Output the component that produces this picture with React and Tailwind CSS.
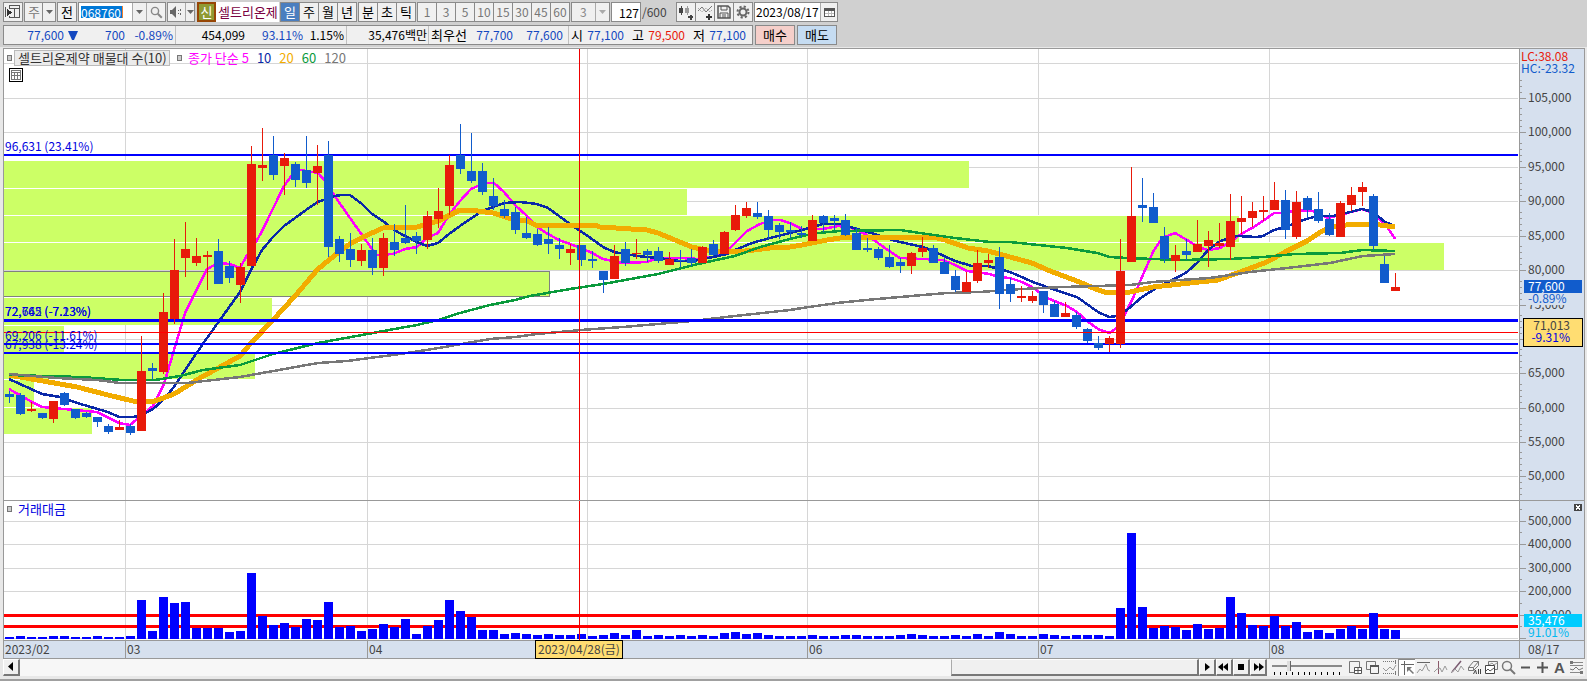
import React, { useState } from 'react';
import clsx from 'clsx';

// [up/down, high, open/close top, open/close bottom, low] in chart pixels
const CANDLES = [
  ['d', 391, 394, 397, 403], ['d', 393, 395, 414, 415], ['u', 402, 409, 411, 412], ['d', 413, 413, 418, 419],
  ['u', 401, 401, 419, 423], ['d', 392, 393, 405, 406], ['d', 409, 409, 418, 419], ['d', 412, 413, 417, 418],
  ['d', 417, 417, 422, 427], ['d', 424, 426, 432, 434], ['u', 420, 427, 430, 430], ['d', 424, 426, 433, 435],
  ['u', 336, 371, 431, 431], ['d', 363, 368, 371, 379], ['u', 293, 312, 372, 374], ['u', 239, 270, 319, 324],
  ['u', 222, 249, 258, 277], ['u', 238, 256, 263, 266], ['u', 251, 255, 257, 290], ['d', 239, 251, 284, 284],
  ['d', 261, 266, 278, 283], ['u', 263, 267, 285, 303], ['u', 146, 164, 266, 266], ['u', 128, 165, 168, 181],
  ['d', 136, 155, 175, 180], ['u', 153, 158, 166, 195], ['d', 162, 164, 180, 187], ['d', 136, 170, 183, 188],
  ['u', 145, 166, 173, 205], ['d', 141, 155, 247, 257], ['d', 236, 239, 254, 262], ['d', 233, 249, 260, 267],
  ['u', 244, 250, 261, 266], ['d', 238, 250, 268, 275], ['u', 233, 238, 268, 276], ['d', 224, 242, 250, 256],
  ['d', 205, 238, 243, 244], ['d', 232, 236, 241, 254], ['u', 211, 216, 240, 249], ['u', 188, 211, 219, 228],
  ['u', 155, 165, 206, 215], ['d', 124, 155, 169, 174], ['d', 133, 171, 181, 183], ['d', 163, 171, 192, 195],
  ['d', 178, 196, 206, 210], ['d', 200, 209, 216, 218], ['d', 207, 212, 230, 234], ['d', 217, 233, 238, 239],
  ['d', 229, 234, 245, 246], ['d', 227, 239, 244, 254], ['d', 238, 245, 249, 259], ['u', 244, 249, 253, 265],
  ['d', 245, 245, 260, 266], ['d', 251, 259, 261, 268], ['d', 271, 271, 280, 293], ['u', 245, 256, 279, 279],
  ['d', 242, 249, 263, 266], ['u', 239, 253, 254, 259], ['d', 249, 251, 255, 262], ['d', 247, 251, 261, 263],
  ['u', 252, 259, 265, 265], ['d', 250, 260, 261, 267], ['d', 249, 258, 263, 266], ['u', 246, 247, 263, 263],
  ['d', 240, 244, 255, 256], ['u', 231, 232, 254, 254], ['u', 205, 215, 230, 231], ['u', 202, 208, 216, 218],
  ['d', 202, 213, 217, 219], ['d', 210, 216, 230, 239], ['d', 223, 225, 232, 239], ['d', 222, 230, 232, 238],
  ['d', 226, 233, 235, 238], ['u', 215, 220, 241, 241], ['d', 215, 216, 223, 232], ['d', 215, 218, 221, 230],
  ['d', 214, 220, 235, 236], ['d', 227, 233, 250, 250], ['d', 238, 248, 250, 252], ['d', 247, 249, 258, 260],
  ['d', 245, 257, 267, 268], ['d', 258, 262, 266, 273], ['u', 252, 253, 266, 274], ['u', 237, 248, 252, 257],
  ['d', 245, 248, 263, 263], ['d', 257, 262, 274, 274], ['d', 270, 276, 290, 292], ['u', 272, 282, 292, 292],
  ['u', 250, 263, 281, 283], ['u', 254, 260, 263, 268], ['d', 247, 257, 294, 309], ['d', 278, 284, 294, 302],
  ['u', 286, 296, 298, 302], ['u', 291, 296, 301, 303], ['d', 291, 291, 305, 313], ['d', 301, 304, 317, 317],
  ['u', 302, 313, 317, 317], ['d', 312, 315, 327, 329], ['d', 328, 329, 341, 343], ['d', 336, 343, 348, 350],
  ['u', 336, 338, 344, 352], ['u', 239, 271, 344, 348], ['u', 167, 216, 262, 262], ['d', 178, 205, 208, 222],
  ['d', 193, 207, 223, 223], ['d', 227, 236, 259, 263], ['u', 245, 255, 261, 272], ['d', 239, 251, 255, 260],
  ['u', 220, 244, 252, 252], ['u', 231, 240, 246, 267], ['u', 223, 243, 246, 248], ['u', 194, 221, 247, 260],
  ['u', 196, 218, 222, 234], ['u', 202, 211, 218, 227], ['u', 196, 210, 212, 221], ['u', 182, 200, 210, 210],
  ['d', 190, 200, 230, 239], ['u', 191, 202, 237, 239], ['d', 196, 198, 210, 218], ['d', 192, 209, 221, 223],
  ['d', 213, 219, 235, 236], ['u', 201, 203, 237, 237], ['u', 187, 195, 205, 211], ['u', 182, 187, 192, 206],
  ['d', 194, 196, 246, 250], ['d', 256, 264, 283, 283], ['u', 273, 287, 291, 291],
];

const VOLUMES = [
  2, 3, 2, 2, 3, 3, 2, 2, 3, 2, 2, 3, 39, 8, 42, 36, 37, 11, 11, 11, 7, 8, 66, 23, 14, 16, 12, 20, 19, 37, 12, 13,
  8, 10, 15, 12, 20, 5, 13, 19, 39, 28, 22, 9, 9, 5, 6, 5, 4, 5, 4, 4, 5, 3, 4, 6, 4, 9, 3, 4, 3, 4, 3, 4, 3, 6, 7,
  5, 6, 4, 3, 3, 3, 4, 3, 3, 4, 4, 3, 3, 3, 4, 5, 4, 3, 3, 4, 3, 5, 3, 7, 5, 3, 3, 5, 4, 3, 4, 4, 4, 3, 31, 106, 32,
  11, 13, 12, 9, 15, 10, 11, 42, 26, 14, 13, 23, 13, 17, 7, 9, 6, 10, 13, 10, 26, 10, 9,
];

const MA5 = '9,389 32,402 42,407 64,409 97,412 119,423 130,425 147,411 153,406 164,384 185,313 207,269 218,263 230,264 240,268 246,257 256,242 262,231 284,186 295,171 301,170 318,173 327,183 334,195 350,218 372,249 377,255 393,254 405,249 417,247 427,238 438,233 449,215 460,201 471,189 480,185 487,183 494,183 504,192 515,205 527,216 537,227 548,234 559,240 570,244 581,248 592,253 603,259 623,263 647,262 658,258 680,258 700,259 718,256 730,248 735,243 747,231 760,224 772,220 780,220 790,223 802,229 823,229 838,226 852,228 867,235 878,243 889,251 900,258 923,259 943,260 955,265 967,271 990,274 998,277 1010,278 1022,282 1032,287 1047,298 1067,306 1077,312 1087,321 1098,329 1109,333 1117,328 1125,314 1133,298 1142,277 1153,252 1162,238 1175,233 1187,240 1198,247 1208,250 1220,248 1230,242 1241,234 1252,228 1263,221 1274,213 1285,213 1297,210 1313,211 1328,218 1340,215 1362,209 1373,213 1388,228 1395,239';
const MA10 = '9,379 42,394 60,397 77,403 108,412 119,417 133,417 142,415 153,409 163,400 174,387 185,370 207,338 240,292 251,270 262,250 273,237 284,226 306,210 318,202 334,196 342,195 350,195 362,204 372,214 383,221 394,230 405,236 417,242 427,246 438,243 449,234 460,226 482,211 504,203 520,202 537,204 548,208 570,224 592,239 603,247 614,252 637,256 658,258 680,261 693,261 713,257 727,254 735,250 752,243 770,238 790,233 802,230 823,224 840,224 857,229 878,235 889,239 900,242 923,247 933,251 955,261 972,266 988,266 1010,272 1033,282 1055,290 1077,297 1098,312 1109,317 1117,316 1127,310 1142,297 1158,287 1180,276 1187,272 1198,262 1208,250 1220,241 1237,236 1257,237 1263,236 1274,230 1285,227 1303,220 1317,216 1333,216 1350,212 1362,209 1373,212 1385,222 1395,226';
const MA20 = '9,375 43,381 77,387 108,395 133,401 155,401 174,394 200,378 240,356 251,343 273,320 295,296 318,269 334,256 350,244 363,237 383,228 400,227 417,227 438,221 460,210 470,210 493,213 515,220 528,221 535,225 595,225 600,227 647,230 658,233 675,240 692,247 710,251 737,252 770,248 790,247 802,245 827,240 847,237 933,237 945,240 968,248 988,251 1010,257 1032,263 1050,271 1077,281 1098,290 1108,293 1130,292 1153,287 1190,283 1218,280 1240,272 1267,262 1285,252 1307,241 1322,231 1333,227 1353,224 1380,225 1395,227';
const MA60 = '9,375 80,377 123,380 155,380 180,376 203,370 240,365 273,354 318,343 362,335 400,328 417,325 438,320 460,313 490,305 515,300 530,296 570,289 603,284 658,274 698,264 735,256 760,247 790,239 802,236 818,233 840,231 900,230 913,232 955,238 990,242 1010,242 1067,248 1097,253 1110,257 1127,258 1180,260 1230,259 1263,257 1295,254 1340,253 1363,250 1395,251';
const MA120 = '9,374 57,378 97,380 120,383 147,383 187,383 240,377 290,368 318,363 347,361 400,354 433,349 467,343 490,339 515,337 537,334 581,330 623,327 658,324 692,321 735,316 790,310 802,308 837,303 877,299 923,295 947,293 980,292 1022,289 1063,287 1097,286 1130,285 1153,282 1180,280 1210,278 1250,272 1287,268 1330,263 1363,256 1395,254';

// volume profile: [top, bottom, right edge]
const PROFILE = [
  [161, 188, 969], [189, 215, 687], [216, 242, 1239], [243, 270, 1444], [298, 325, 272],
  [326, 353, 64], [354, 379, 255], [380, 407, 34], [408, 434, 92],
];

const PRICE_GRID = [63, 98, 132, 167, 201, 236, 270, 305, 339, 373, 408, 442, 476];
const PRICE_LABELS = [
  [98, '105,000'], [132, '100,000'], [167, '95,000'], [201, '90,000'], [236, '85,000'], [270, '80,000'],
  [305, '75,000'], [373, '65,000'], [408, '60,000'], [442, '55,000'], [476, '50,000'],
];
const VOLUME_GRID = [521, 544, 568, 591, 615, 638];
const VOLUME_LABELS = [[521, '500,000'], [544, '400,000'], [568, '300,000'], [591, '200,000'], [615, '100,000']];
const MONTHS = [[125, '03'], [367, '04'], [587, ''], [807, '06'], [1038, '07'], [1269, '08']];
const LEVELS = [[154, 2], [319, 3], [343, 2], [352, 2]];
const CROSS = { x: 579, y: 332 };

const LEFT = 4;
const WIDTH = 1515;
const pct = (x) => `${((x - LEFT) / WIDTH) * 100}%`;

const Down = ({ className = 'fill-[#666]' }) => (
  <svg width="7" height="4" viewBox="0 0 7 4" className={className}>
    <path d="M0 0h7L3.5 4z" />
  </svg>
);

const ToolButton = ({ label, className, children }) => (
  <button
    type="button"
    aria-label={label}
    className={clsx('flex h-5 shrink-0 items-center justify-center border border-[#8a8a8a] bg-[#f0f0f0]', className)}
  >
    {children}
  </button>
);

const Segments = ({ items, active, onSelect, className }) => (
  <div className={clsx('flex h-5 shrink-0 border border-[#8a8a8a] bg-[#f0f0f0]', className)}>
    {items.map((item, i) => (
      <button
        key={item}
        type="button"
        onClick={() => onSelect && onSelect(item)}
        className={clsx(
          'flex flex-1 items-center justify-center',
          i > 0 && 'border-l border-[#8a8a8a]',
          item === active && 'bg-[#4a7ebf] text-white',
        )}
      >
        {item}
      </button>
    ))}
  </div>
);

const Toolbar = () => {
  const [period, setPeriod] = useState('일');

  return (
    <div className="flex h-5 items-center gap-px pl-[3px] text-[13px] leading-[18px]">
      <ToolButton label="창 열기" className="w-5">
        <svg width="16" height="14" viewBox="0 0 16 14" fill="none" stroke="#555" shapeRendering="crispEdges">
          <path d="M4.5 4V.5h10v12h-10v-2M4 3.5h11M9.500 3v10M.5 2v10" />
          <path d="M2 4l5 3.500L2 11z" fill="#333" stroke="none" />
        </svg>
      </ToolButton>
      <div className="relative flex h-5 w-8 shrink-0 border border-[#8a8a8a] bg-[#f0f0f0]">
        <select aria-label="주기" className="w-full appearance-none bg-transparent pl-[3px] text-[#777] outline-none">
          <option>주</option>
        </select>
        <span className="pointer-events-none absolute inset-y-0 right-0 flex w-[13px] items-center justify-center border-l border-[#8a8a8a]">
          <Down />
        </span>
      </div>
      <ToolButton className="w-5">전</ToolButton>
      <div className="flex h-5 w-[88px] shrink-0 items-center border border-[#8a8a8a] bg-white">
        <div className="flex-1 pl-0.5">
          <input
            aria-label="종목코드"
            defaultValue="068760"
            className="block h-3 w-[42px] border-r border-[#f08030] bg-[#0078d7] text-[12px] leading-3 text-white outline-none"
          />
        </div>
        <button type="button" aria-label="종목 목록" className="flex h-full w-3.5 items-center justify-center border-l border-[#aaa] bg-[#f0f0f0]">
          <Down />
        </button>
        <button type="button" aria-label="종목 검색" className="flex h-full w-[19px] items-center justify-center border-l border-[#aaa] bg-[#f0f0f0]">
          <svg width="13" height="13" viewBox="0 0 13 13" fill="none" stroke="#888">
            <circle cx="5" cy="5" r="3.6" strokeWidth="1.4" />
            <path d="M7.8 7.8l4 4" strokeWidth="2" />
          </svg>
        </button>
      </div>
      <div className="flex h-5 w-7 shrink-0 border border-[#8a8a8a] bg-[#f0f0f0]">
        <button type="button" aria-label="소리" className="flex w-[17px] items-center justify-center">
          <svg width="13" height="12" viewBox="0 0 13 12" fill="#666">
            <path d="M0 4h2l4-4v12L2 8H0zM8 4h1v1H8zM8 7h1v1H8zM10 3h1v2h-1zM10 7h1v2h-1z" />
          </svg>
        </button>
        <button type="button" aria-label="소리 설정" className="flex flex-1 items-center justify-center border-l border-[#aaa]">
          <Down />
        </button>
      </div>
      <div className="ml-px flex h-5 w-[82px] shrink-0 items-center bg-white text-[#7a0040]">
        <span className="flex h-5 w-[19px] shrink-0 items-center justify-center border-2 border-[#974706] bg-[#8f9a33] text-white">신</span>
        <span className="overflow-hidden pl-0.5 whitespace-nowrap">셀트리온제</span>
      </div>
      <Segments items={['일', '주', '월', '년']} active={period} onSelect={setPeriod} className="w-[77px]" />
      <Segments items={['분', '초', '틱']} className="w-[58px]" />
      <Segments items={['1', '3', '5', '10', '15', '30', '45', '60']} className="w-[153px] text-[12px] text-[#777]" />
      <div className="relative flex h-5 w-[39px] shrink-0 border border-[#8a8a8a] bg-[#f0f0f0]">
        <select aria-label="간격" className="w-full appearance-none bg-transparent pl-2 text-[12px] text-[#888] outline-none">
          <option>3</option>
        </select>
        <span className="pointer-events-none absolute inset-y-0 right-0 flex w-3.5 items-center justify-center border-l border-[#aaa]">
          <Down className="fill-[#aaa]" />
        </span>
      </div>
      <label className="flex h-5 w-16 shrink-0 items-center text-[12px] text-[#444]">
        <input
          aria-label="조회 개수"
          defaultValue="127"
          className="h-5 w-[30px] border border-[#8a8a8a] bg-white pr-px text-right text-black outline-none"
        />
        <span className="pl-px">/600</span>
      </label>
      <div className="flex h-5 w-[77px] shrink-0 border border-[#8a8a8a] bg-[#f0f0f0]">
        <button type="button" aria-label="차트 추가" className="flex flex-1 items-center justify-center">
          <svg width="15" height="15" viewBox="0 0 15 15" fill="#444" shapeRendering="crispEdges">
            <path d="M0 3h4v5H0zM1.5 1h1v9h-1z" />
            <path d="M6 3h4v5H6zM7.5 1h1v9h-1z" fill="#999" />
            <path d="M9 11h5v2H9zM10.5 9.500h2v5h-2z" />
          </svg>
        </button>
        <button type="button" aria-label="지표 추가" className="flex flex-1 items-center justify-center border-l border-[#8a8a8a]">
          <svg width="15" height="15" viewBox="0 0 15 15" fill="none" stroke="#777">
            <path d="M0 6l4-4 4 5 6-6" />
            <path d="M0 3l4 4 4-4 4 4 2-2" stroke="#aaa" strokeDasharray="2 1" />
            <path d="M8 12h6M11 9v6" stroke="#333" strokeWidth="2" />
          </svg>
        </button>
        <button type="button" aria-label="저장" className="flex flex-1 items-center justify-center border-l border-[#8a8a8a]">
          <svg width="14" height="14" viewBox="0 0 14 14" fill="none" stroke="#555" strokeWidth="1.5">
            <path d="M1 1h10l2 2v10H1z" />
            <path d="M4 1v4h6V1M3 13V8h8v5M5 10h4M5 12h4" strokeWidth="1" />
          </svg>
        </button>
        <button type="button" aria-label="설정" className="flex flex-1 items-center justify-center border-l border-[#8a8a8a]">
          <svg width="14" height="14" viewBox="0 0 14 14" fill="none" stroke="#666">
            <circle cx="7" cy="7" r="3.5" strokeWidth="2" />
            <circle cx="7" cy="7" r="5.5" strokeWidth="2" strokeDasharray="2.200 2.120" />
          </svg>
        </button>
      </div>
      <div className="flex h-5 w-[84px] shrink-0 items-center border border-[#8a8a8a] bg-white">
        <input aria-label="기준일" defaultValue="2023/08/17" className="w-[65px] pl-px text-[12px] outline-none" />
        <button type="button" aria-label="달력" className="flex h-full flex-1 items-center justify-center border-l border-[#aaa] bg-[#f0f0f0]">
          <svg width="11" height="10" viewBox="0 0 11 10" fill="none" stroke="#555" shapeRendering="crispEdges">
            <path d="M.5 1.500h10v8H.5z" fill="#fff" />
            <path d="M0 2h11" strokeWidth="3" />
            <path d="M4 4v5M7 4v5M1 6.500h9" stroke="#bbb" />
          </svg>
        </button>
      </div>
    </div>
  );
};

const QuoteBar = () => (
  <div className="flex h-5 gap-0.5 pl-[3px] text-[12px] leading-[18px] text-black">
    <div className="flex h-5 w-[750px] shrink-0 items-center border border-[#8a8a8a] bg-[#f0f0f0] text-right whitespace-nowrap">
      <span className="w-[60px] text-[#1448c0]">77,600</span>
      <svg width="10" height="9" viewBox="0 0 10 9" className="ml-1 fill-[#1448c0]">
        <path d="M0 0h10L6 9H4z" />
      </svg>
      <span className="w-[47px] text-[#1448c0]">700</span>
      <span className="w-12 text-[#1448c0]">-0.89%</span>
      <span className="ml-0.5 h-full w-px bg-[#c0c0c0]" />
      <span className="w-[69px]">454,099</span>
      <span className="w-[58px] text-[#1448c0]">93.11%</span>
      <span className="w-[41px]">1.15%</span>
      <span className="ml-0.5 h-full w-px bg-[#c0c0c0]" />
      <span className="w-20">35,476백만</span>
      <span className="ml-px h-full w-px bg-[#c0c0c0]" />
      <span className="w-[38px] text-[13px]">최우선</span>
      <span className="w-[46px] text-[#1448c0]">77,700</span>
      <span className="w-[50px] text-[#1448c0]">77,600</span>
      <span className="ml-[5px] h-full w-px bg-[#c0c0c0]" />
      <span className="w-3.5 text-[13px]">시</span>
      <span className="w-[41px] text-[#1448c0]">77,100</span>
      <span className="w-5 text-[13px]">고</span>
      <span className="w-[41px] text-[#e8190a]">79,500</span>
      <span className="w-5 text-[13px]">저</span>
      <span className="w-[41px] text-[#1448c0]">77,100</span>
    </div>
    <button type="button" className="h-5 w-10 shrink-0 border border-[#8a8a8a] bg-[#f5cfca] text-[13px]">매수</button>
    <button type="button" className="h-5 w-10 shrink-0 border border-[#8a8a8a] bg-[#c5dcf2] text-[13px]">매도</button>
  </div>
);

const Marker = () => <span className="h-1.5 w-[5px] shrink-0 border border-[#777] bg-[#ccc]" />;

const LevelLabel = ({ className, children }) => (
  <span className={clsx('absolute left-px whitespace-nowrap text-[#0000e0]', className)}>{children}</span>
);

const PricePane = () => (
  <div className="relative min-w-0 flex-1">
    <svg viewBox="4 49 1515 451" preserveAspectRatio="none" shapeRendering="crispEdges" className="block h-[451px] w-full">
      {MONTHS.map(([x]) => <rect key={x} x={x} y="49" width="1" height="451" fill="#d6d6d6" />)}
      {PRICE_GRID.map((y) => <rect key={y} x="4" y={y} width="1514" height="1" fill="#d6d6d6" />)}
      {PROFILE.map(([top, bottom, right]) => (
        <g key={top}>
          <rect x="4" y={top - 1} width={right - 4} height="1" fill="#fff" />
          <rect x="4" y={top} width={right - 4} height={bottom - top} fill="#ccff66" />
        </g>
      ))}
      <rect x="3.5" y="271.500" width="546" height="25" fill="#ccff66" stroke="#808080" />
      <g fill="none" strokeLinejoin="round">
        <polyline points={MA5} stroke="#ff00ff" strokeWidth="2.5" />
        <polyline points={MA10} stroke="#0a28a8" strokeWidth="2.5" />
        <polyline points={MA20} stroke="#f2ac00" strokeWidth="5" />
        <polyline points={MA60} stroke="#0a9a3c" strokeWidth="2.5" />
        <polyline points={MA120} stroke="#777" strokeWidth="2.5" />
      </g>
      {LEVELS.map(([y, h]) => <rect key={y} x="4" y={y} width="1514" height={h} fill="#0000ff" />)}
      {CANDLES.map(([dir, high, top, bottom, low], i) => (
        <g key={i} fill={dir === 'u' ? '#e81a0a' : '#115ccc'}>
          <rect x={9 + 11 * i} y={high} width="1" height={low - high} />
          <rect x={5 + 11 * i} y={top} width="9" height={bottom - top} />
        </g>
      ))}
      <rect x="4" y={CROSS.y} width="1514" height="1" fill="#f00" />
      <rect x={CROSS.x} y="49" width="1" height="451" fill="#e00" />
    </svg>
    <div className="absolute top-px left-[3px] flex h-4 items-center text-[13px] leading-4 whitespace-nowrap">
      <Marker />
      <span className="ml-0.5 h-4 w-[156px] border border-[#bbb] bg-[#ebebeb] pl-[3px] leading-[13px] text-[#333]">
        셀트리온제약 매물대 수(10)
      </span>
      <span className="w-[7px]" />
      <Marker />
      <span className="ml-1.5 flex gap-2">
        <span className="text-[#ff00ff]">종가 단순 5</span>
        <span className="text-[#0a28a8]">10</span>
        <span className="text-[#f2ac00]">20</span>
        <span className="text-[#0a9a3c]">60</span>
        <span className="text-[#777]">120</span>
      </span>
    </div>
    <button type="button" aria-label="표 보기" className="absolute top-[19px] left-[5px]">
      <svg width="14" height="14" viewBox="0 0 14 14" fill="none" shapeRendering="crispEdges">
        <path d="M.5.5h13v13H.5z" fill="#fff" stroke="#000" />
        <path d="M2.500 2.500h9v9h-9zM2 4.500h10M2 7.500h10M5.500 4v8M8.500 4v8" stroke="#777" />
      </svg>
    </button>
    <div className="text-[12px] leading-4">
      <LevelLabel className="top-[89px]">96,631 (23.41%)</LevelLabel>
      <LevelLabel className="top-[254px]">72,765 (-7.13%)</LevelLabel>
      <LevelLabel className="top-[254px]">72,642 (-7.23%)</LevelLabel>
      <LevelLabel className="top-[278px]">69,206 (-11.61%)</LevelLabel>
      <LevelLabel className="top-[287px]">67,938 (-13.24%)</LevelLabel>
    </div>
  </div>
);

const PriceAxis = () => (
  <svg width="65" height="451" viewBox="1519 49 65 451" shapeRendering="crispEdges" className="block shrink-0 bg-[#d6e0ee] text-[12px]">
    <rect x="1519" y="49" width="1" height="451" fill="#999" />
    {PRICE_GRID.slice(1).map((y) => (
      <g key={y} fill="#999">
        <rect x="1520" y={y} width="6" height="1" />
        {[6, 12, 18, 24].filter((d) => y - d > 75).map((d) => (
          <rect key={d} x="1520" y={y - d} width="2" height="1" />
        ))}
      </g>
    ))}
    {[482, 488, 494].map((y) => <rect key={y} x="1520" y={y} width="2" height="1" fill="#999" />)}
    <g fill="#444">
      {PRICE_LABELS.map(([y, label]) => <text key={y} x="1528" y={y + 4}>{label}</text>)}
    </g>
    <text x="1521" y="61" fill="#e81a0a">LC:38.08</text>
    <text x="1521" y="73" fill="#115ccc">HC:-23.32</text>
    <rect x="1526" y="293" width="56" height="12" fill="#d6e0ee" />
    <rect x="1524" y="280" width="58" height="13" fill="#115ccc" />
    <text x="1528" y="291" fill="#fff">77,600</text>
    <text x="1528" y="303" fill="#115ccc">-0.89%</text>
    <rect x="1523.500" y="318.500" width="59" height="28" fill="#ffdd72" stroke="#000" />
    <text x="1570" y="330" fill="#444" textAnchor="end">71,013</text>
    <text x="1570" y="342" fill="#0000e0" textAnchor="end">-9.31%</text>
  </svg>
);

const VolumePane = () => (
  <div className="relative min-w-0 flex-1">
    <svg viewBox="4 501 1515 139" preserveAspectRatio="none" shapeRendering="crispEdges" className="block h-[139px] w-full">
      {MONTHS.map(([x]) => <rect key={x} x={x} y="501" width="1" height="139" fill="#d6d6d6" />)}
      {VOLUME_GRID.map((y) => <rect key={y} x="4" y={y} width="1514" height="1" fill="#d6d6d6" />)}
      <rect x="4" y="614" width="1514" height="3" fill="#f00" />
      <rect x="4" y="625" width="1514" height="3" fill="#f00" />
      {VOLUMES.map((v, i) => <rect key={i} x={5 + 11 * i} y={639 - v} width="9" height={v} fill="#0000ff" />)}
      <rect x={CROSS.x} y="501" width="1" height="139" fill="#e00" />
    </svg>
    <div className="absolute top-0 left-[3px] flex h-4 items-center gap-1.5 text-[13px] leading-4 text-[#0000e0]">
      <Marker />
      거래대금
    </div>
  </div>
);

const VolumeAxis = () => (
  <svg width="65" height="139" viewBox="1519 501 65 139" shapeRendering="crispEdges" className="block shrink-0 bg-[#d6e0ee] text-[12px]">
    <rect x="1519" y="501" width="1" height="139" fill="#999" />
    {VOLUME_GRID.map((y) => (
      <g key={y} fill="#999">
        <rect x="1520" y={y} width="6" height="1" />
        <rect x="1520" y={y - 12} width="2" height="1" />
      </g>
    ))}
    <g fill="#444">
      {VOLUME_LABELS.map(([y, label]) => <text key={y} x="1528" y={y + 4}>{label}</text>)}
    </g>
    <rect x="1574" y="504" width="8" height="7" fill="#444" />
    <path d="M1576 505.500l4 4M1580 505.500l-4 4" stroke="#fff" />
    <rect x="1524" y="614" width="58" height="13" fill="#00ccff" />
    <text x="1528" y="625" fill="#fff">35,476</text>
    <text x="1528" y="637" fill="#00b8f0">91.01%</text>
  </svg>
);

const DateAxis = () => (
  <div className="flex h-[17px] bg-[#d6e0ee] text-[12px] leading-[15px] text-[#444]">
    <div className="relative min-w-0 flex-1">
      <span className="absolute left-px">2023/02</span>
      {MONTHS.map(([x, label]) => (
        <span key={x} className="absolute h-full border-l border-[#999] pl-px" style={{ left: pct(x) }}>
          {label}
        </span>
      ))}
      <span
        className="absolute -top-px h-[19px] w-[88px] border border-black bg-[#ffdd72] pl-0.5 whitespace-nowrap"
        style={{ left: pct(535) }}
      >
        2023/04/28(금)
      </span>
    </div>
    <span className="w-[65px] shrink-0 border-l border-[#999] pl-2">08/17</span>
  </div>
);

const Raised = ({ label, children }) => (
  <button
    type="button"
    aria-label={label}
    className="flex h-[17px] w-[17px] shrink-0 items-center justify-center border-t border-r-2 border-b-2 border-l border-t-white border-r-[#777] border-b-[#777] border-l-white bg-[#f0f0f0]"
  >
    <svg width="12" height="10" viewBox="0 0 12 10" fill="#000">{children}</svg>
  </button>
);

const TOOLS = [
  ['새 차트', <><path d="M1.500 12.500V1.500h10v6M1 12.500h6" /><path d="M6.500 7.500h7v6h-7zM6 10.500h8M10 7v7" fill="#fff" stroke="#555" /></>],
  ['겹치기', <><path d="M1.500 1.500h9v8h-9z" /><path d="M5.500 5.500h8v8h-8z" fill="#f2f2f2" stroke="#555" /><path d="M5 6h9" stroke="#555" strokeWidth="2" /></>],
  ['범위', <><path d="M1 1.500h13M1 13.500h13" strokeDasharray="1 1" /><path d="M1 8l3 3 4-4 3 3 3-5" stroke="#999" /><path d="M13.500 0v4M13.500 11v4" /></>],
  ['십자선', <><path d="M1 3.500h13M4.500 0v14" stroke="#666" /><path d="M7.500 6.500l6 6" stroke="#777" strokeWidth="1.500" /><path d="M7 6h5l-5 5z" fill="#777" stroke="none" /></>],
  ['추세선', <><path d="M1 2.500h13" stroke="#666" /><path d="M1 13l3-4 2 2 4-7 2 6 2 1" stroke="#999" /></>],
  ['수직선', <><path d="M5.500 1v13" stroke="#8a5a6a" /><path d="M1 12l3-3 3-1 2 4 3-6 2 4" stroke="#999" /></>],
  ['사선', <><path d="M2 12L11 1" stroke="#7a5a70" strokeWidth="1.500" /><path d="M1 13l4-4 3 3 3-6 3 4" stroke="#999" /></>],
  ['모두 지우기', <><path d="M1.500 7.500l5-6h5l-5 6zM1.500 7.500v3h5v-3M6.500 10.500l5-5v-4" /><path d="M6.500 14l2-4 1 4M11.500 9v5M13.500 9v5" stroke="#444" /></>],
  ['그림 복사', <><path d="M4.500 5V1.500h9v8H11" /><path d="M5 5l3-2 2 2 3-2" stroke="#999" /><path d="M1.500 5.500h9v8h-9z" fill="#fff" stroke="#444" /><path d="M2 11l2-2 2 2 4-3" stroke="#555" /></>],
  ['확대경', <><circle cx="6" cy="6" r="4.500" strokeWidth="1.500" /><path d="M9 9l5 5" strokeWidth="2" /></>],
  ['축소', <path d="M3 7.500h9" stroke="#555" strokeWidth="2" />],
  ['확대', <path d="M2 7.500h11M7.500 2v11" stroke="#555" strokeWidth="2" />],
];

const BottomBar = () => (
  <div className="flex h-[17px] items-center bg-[#f2f2f2]">
    <Raised label="왼쪽으로"><path d="M8 0v9L3 4.500z" /></Raised>
    <div className="flex h-full min-w-0 flex-1 justify-end bg-[#f7f7f7]">
      <div className="h-full w-[21%] border-t border-r-2 border-b-2 border-l border-t-white border-r-[#777] border-b-[#777] border-l-[#aaa] bg-[#f0f0f0]" />
    </div>
    <Raised label="재생"><path d="M4 1v8l5-4z" /></Raised>
    <Raised label="뒤로"><path d="M5 1v8L0 5zM10 1v8L5 5z" /></Raised>
    <Raised label="정지"><path d="M3 2h6v6H3z" /></Raised>
    <Raised label="앞으로"><path d="M2 1v8l5-4zM7 1v8l5-4z" /></Raised>
    <div className="ml-[5px] flex w-[70px] shrink-0 flex-col">
      <input
        type="range"
        aria-label="재생 속도"
        min="0"
        max="100"
        defaultValue="23"
        className="h-3 w-full appearance-none bg-transparent [&::-webkit-slider-runnable-track]:h-0.5 [&::-webkit-slider-runnable-track]:bg-[#8a8a8a] [&::-webkit-slider-thumb]:-mt-1 [&::-webkit-slider-thumb]:h-2.5 [&::-webkit-slider-thumb]:w-1 [&::-webkit-slider-thumb]:appearance-none [&::-webkit-slider-thumb]:border-r [&::-webkit-slider-thumb]:border-[#666] [&::-webkit-slider-thumb]:bg-[#ddd]"
      />
      <div className="flex h-[3px] justify-between px-0.5">
        {Array.from({ length: 12 }, (_, i) => <span key={i} className="w-px bg-black" />)}
      </div>
    </div>
    <div className="ml-[5px] flex shrink-0">
      {TOOLS.map(([label, icon]) => (
        <button
          key={label}
          type="button"
          aria-label={label}
          className={clsx('flex h-[17px] w-[17px] items-center justify-center', label === '십자선' && 'border-t border-l border-[#888] bg-white')}
        >
          <svg width="15" height="15" viewBox="0 0 15 15" fill="none" stroke="#777" className="shrink-0">{icon}</svg>
        </button>
      ))}
      <button type="button" className="flex h-[17px] w-[17px] items-center justify-center font-['Liberation_Sans'] text-[15px] leading-4 font-bold text-[#555]">
        A
      </button>
      <button type="button" aria-label="차트 설정" className="flex h-[17px] w-[17px] items-center justify-center">
        <svg width="15" height="15" viewBox="0 0 15 15" fill="none" stroke="#777">
          <path d="M1 2.500h13M1 5.500h13M1 12.500h13" stroke="#888" />
          <path d="M1 9l3 1 3-3 3 3 4-2" />
          <path d="M1 1h3v3H1zM11 11h3v3h-3z" fill="#777" stroke="none" />
        </svg>
      </button>
    </div>
  </div>
);

export default function App() {
  return (
    <div className="w-full overflow-hidden bg-[#e8e8e8] font-['Noto_Sans_CJK_KR',sans-serif]">
      <header className="flex h-[47px] flex-col gap-[3px] bg-[#d0d0d0] pt-0.5">
        <Toolbar />
        <QuoteBar />
      </header>
      <main className="mt-px mr-0.5 ml-[3px] border-t border-r border-l border-[#999] bg-white">
        <section className="flex border-b border-[#999]">
          <PricePane />
          <PriceAxis />
        </section>
        <section className="flex border-b border-[#999]">
          <VolumePane />
          <VolumeAxis />
        </section>
        <DateAxis />
      </main>
      <footer className="mr-0.5 ml-[3px] border-t border-[#999] pb-[3px]">
        <BottomBar />
      </footer>
      <div className="h-0.5 bg-[#a0a0a0]" />
    </div>
  );
}
